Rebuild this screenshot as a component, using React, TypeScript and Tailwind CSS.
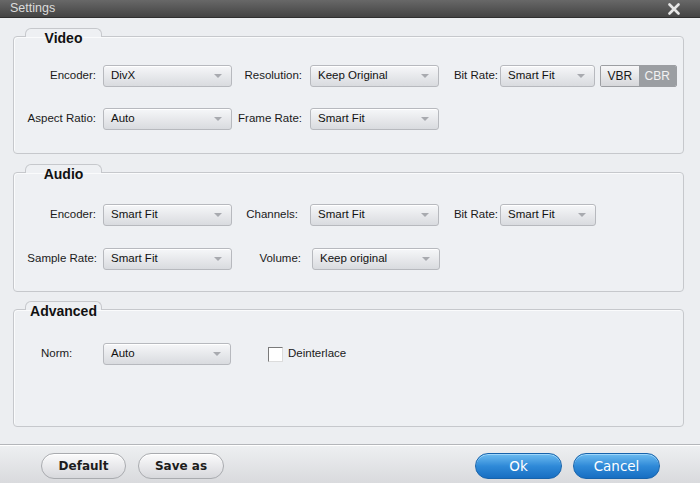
import React from 'react'

const font = "font-['Liberation_Sans',Arial,sans-serif]"

function Select({ value, width }: { value: string; width: number }) {
  return (
    <div
      className="flex h-[22px] items-center justify-between rounded-[3px] border border-[#b7b9be] bg-gradient-to-b from-[#f6f7f9] to-[#d9dbdf] pl-[7px] pr-[9px] shadow-[inset_0_1px_0_#ffffff]"
      style={{ width }}
    >
      <span className="text-[#111]">{value}</span>
      <span className="h-0 w-0 border-l-[4px] border-r-[4px] border-t-[4px] border-l-transparent border-r-transparent border-t-[#a8aaaf]" />
    </div>
  )
}

function Field({
  label,
  labelW,
  gap,
  value,
  selectW,
}: {
  label: string
  labelW: number
  gap: number
  value: string
  selectW: number
}) {
  return (
    <>
      <span className="shrink-0 text-right" style={{ width: labelW, marginRight: gap }}>
        {label}
      </span>
      <Select value={value} width={selectW} />
    </>
  )
}

function Group({
  title,
  className,
  children,
}: {
  title: string
  className: string
  children: React.ReactNode
}) {
  return (
    <div className={`flex flex-col ${className}`}>
      {/* tab sits over the box's top border */}
      <div className="relative z-10 -mb-px ml-[12px] h-[9px] w-[77px] rounded-t-[6px] border border-b-0 border-[#c6c8cc] bg-[#eef0f3]">
        <div className="mt-[1px] text-center text-[14px] font-bold leading-[16px] text-[#111]">{title}</div>
      </div>
      <div className="flex-1 rounded-[4px] border border-[#c6c8cc] bg-[#eef0f3] shadow-[inset_1px_1px_0_#fafbfc]">
        {children}
      </div>
    </div>
  )
}

function GrayButton({ label, width }: { label: string; width: number }) {
  return (
    <button
      className="h-[26px] rounded-full border border-[#a9abaf] bg-gradient-to-b from-[#fbfbfc] to-[#d7d8dc] font-['DejaVu_Sans',sans-serif] text-[12px] font-bold text-[#1c1c1c] shadow-[inset_0_1px_0_#ffffff]"
      style={{ width }}
    >
      {label}
    </button>
  )
}

function BlueButton({ label }: { label: string }) {
  return (
    <button className="h-[26px] w-[87px] rounded-full border border-[#1763ab] bg-gradient-to-b from-[#6cbcf0] via-[#2f8ad8] to-[#176ec2] font-['DejaVu_Sans',sans-serif] text-[13.5px] text-white shadow-[inset_0_1px_0_#9fd6fa]">
      {label}
    </button>
  )
}

export default function App() {
  return (
    <div className={`flex h-[483px] w-[700px] flex-col overflow-hidden bg-[#eceef1] ${font} text-[11.5px] text-[#1a1a1a]`}>
      {/* Title bar */}
      <div className="flex h-[18px] shrink-0 items-center justify-between border-b border-[#2f2f2f] bg-gradient-to-b from-[#686868] to-[#444444] pl-[10px] pr-[20px]">
        <span className="text-[12.5px] leading-none text-[#dcdcdc]">Settings</span>
        <svg width="12" height="12" viewBox="0 0 12 12">
          <path d="M1.5 1.5 L10.5 10.5 M10.5 1.5 L1.5 10.5" stroke="#e6e6e6" strokeWidth="2.6" strokeLinecap="round" />
        </svg>
      </div>

      {/* Content */}
      <div className="flex flex-1 flex-col pl-[13px] pr-[16px] pt-[10px]">
        <Group title="Video" className="h-[126px]">
          <div className="flex flex-col gap-[21px] pt-[28px]">
            <div className="flex items-center">
              <Field label="Encoder:" labelW={82} gap={7} value="DivX" selectW={129} />
              <Field label="Resolution:" labelW={70} gap={8} value="Keep Original" selectW={129} />
              <Field label="Bit Rate:" labelW={59} gap={2} value="Smart Fit" selectW={95} />
              <div className="ml-[5px] flex h-[22px] w-[77px] overflow-hidden rounded-[2px] border border-[#9c9ea2] text-[12px]">
                <div className="flex flex-1 items-center justify-center bg-gradient-to-b from-[#f7f7f8] to-[#d6d7da] text-[#1a1a1a]">VBR</div>
                <div className="flex flex-1 items-center justify-center bg-[#9b9ea2] text-[#f2f2f2]">CBR</div>
              </div>
            </div>
            <div className="flex items-center">
              <Field label="Aspect Ratio:" labelW={82} gap={7} value="Auto" selectW={129} />
              <Field label="Frame Rate:" labelW={70} gap={8} value="Smart Fit" selectW={129} />
            </div>
          </div>
        </Group>

        <Group title="Audio" className="mt-[10px] h-[128px]">
          <div className="flex flex-col gap-[22px] pt-[31px]">
            <div className="flex items-center">
              <Field label="Encoder:" labelW={82} gap={7} value="Smart Fit" selectW={129} />
              <Field label="Channels:" labelW={66} gap={12} value="Smart Fit" selectW={129} />
              <Field label="Bit Rate:" labelW={59} gap={2} value="Smart Fit" selectW={96} />
            </div>
            <div className="flex items-center">
              <Field label="Sample Rate:" labelW={83} gap={6} value="Smart Fit" selectW={129} />
              <Field label="Volume:" labelW={69} gap={11} value="Keep original" selectW={128} />
            </div>
          </div>
        </Group>

        <Group title="Advanced" className="mt-[9px] h-[126px]">
          <div className="flex items-center pt-[33px]">
            <span className="w-[89px] pl-[27px]">Norm:</span>
            <Select value="Auto" width={128} />
            <span className="ml-[37px] h-[15px] w-[15px] border border-b-[#dcdcdc] border-l-[#7a7a7a] border-r-[#dcdcdc] border-t-[#7a7a7a] bg-white" />
            <span className="ml-[5px]">Deinterlace</span>
          </div>
        </Group>
      </div>

      {/* Footer */}
      <div className="flex h-[39px] shrink-0 items-start border-t border-[#b4b6ba] bg-gradient-to-b from-[#eef0f2] to-[#d9dadd] pl-[41px] pr-[40px] pt-[8px] shadow-[inset_0_1px_0_#ffffff]">
        <GrayButton label="Default" width={85} />
        <div className="ml-[12px]">
          <GrayButton label="Save as" width={86} />
        </div>
        <div className="ml-auto flex gap-[11px]">
          <BlueButton label="Ok" />
          <BlueButton label="Cancel" />
        </div>
      </div>
    </div>
  )
}
